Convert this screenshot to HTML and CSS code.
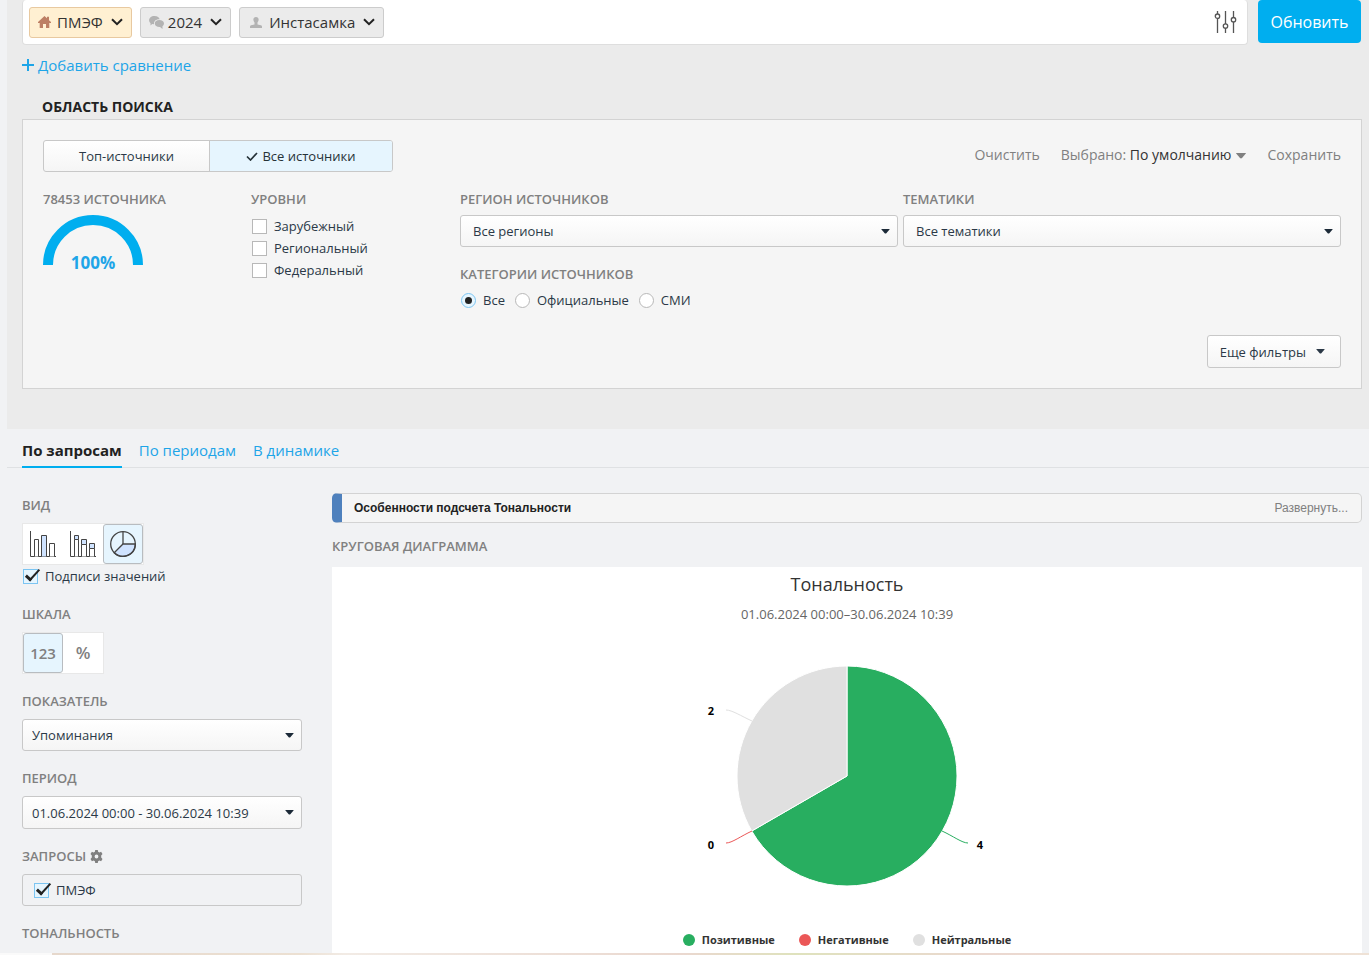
FILE: index.html
```html
<!DOCTYPE html>
<html lang="ru">
<head>
<meta charset="utf-8">
<title>Тональность</title>
<link rel="stylesheet" href="styles.css">
</head>
<body>
<svg class="defs" aria-hidden="true">
  <symbol id="chevron" viewBox="0 0 12 8"><path d="M1 1.2 6 6.2 11 1.2" fill="none" stroke="currentColor" stroke-width="2"/></symbol>
  <symbol id="caret" viewBox="0 0 10 6"><path d="M.5 0h9q.5 0 .3.6L6 5q-1 .8-2 0L.2.6Q0 0 .5 0z" fill="currentColor"/></symbol>
</svg>
<header class="search-area">
  <div class="topbar">
    <div class="query-field">
      <button class="chip chip-active" type="button">
        <svg class="chip-icon home" width="13" height="12" viewBox="0 0 13 12"><path d="M6.5 0 9 2.3V.8h2v3.4L13 6v1h-1.700v5H8V8H5v4H1.700V7H0V6z" fill="currentColor"/></svg>
        <span>ПМЭФ</span><svg class="chevron"><use href="#chevron"/></svg>
      </button>
      <button class="chip" type="button">
        <svg class="chip-icon chat" width="15" height="13" viewBox="0 0 15 13"><path d="M5.500 0C8.500 0 10.300 1.500 10.600 3.200 7.500 3 5 4.700 5 7.200v1L3.200 8 1.500 9.500V7.200C-1.500 4.500.5 0 5.500 0z" fill="currentColor"/><path d="M10.300 4C13 4 15 5.500 15 7.400c0 1.200-.7 2.100-1.500 2.700V13L11 10.900C8 11.100 5.800 9.500 5.800 7.400 5.800 5.500 7.700 4 10.300 4z" fill="currentColor"/></svg>
        <span>2024</span><svg class="chevron"><use href="#chevron"/></svg>
      </button>
      <button class="chip" type="button">
        <svg class="chip-icon person" width="12" height="11" viewBox="0 0 12 11"><path d="M6 0C7.800 0 8.800 1.300 8.600 3 8.500 4.300 7.800 5 7.500 5.600v1.800L11 8.200q1 .3 1 1.300V11H0V9.500Q0 8.500 1 8.200l3.500-.8V5.600C4.200 5 3.500 4.300 3.400 3 3.200 1.300 4.200 0 6 0z" fill="currentColor"/></svg>
        <span>Инстасамка</span><svg class="chevron"><use href="#chevron"/></svg>
      </button>
      <button class="tune" type="button" aria-label="Настройки">
        <svg width="23" height="22" viewBox="0 0 23 22" fill="none" stroke="#555" stroke-width="1.300"><path d="M3.500 0v3M3.500 7.500V22M11.500 0v13M11.500 17v5M19.500 0v6.500M19.500 11v11"/><circle cx="3.500" cy="5.200" r="2.200"/><circle cx="11.500" cy="15" r="2.200"/><circle cx="19.500" cy="8.700" r="2.200"/></svg>
      </button>
    </div>
    <button class="refresh" type="button">Обновить</button>
  </div>
  <a class="add-link" href="#"><svg width="12" height="12" viewBox="0 0 12 12"><path d="M6 0v12M0 6h12" stroke="currentColor" stroke-width="2"/></svg>Добавить сравнение</a>
  <h2 class="area-title">ОБЛАСТЬ ПОИСКА</h2>
  <section class="panel">
    <div class="panel-head">
      <div class="segmented">
        <button type="button">Топ-источники</button>
        <button type="button" class="selected"><svg width="12" height="9" viewBox="0 0 12 9"><path d="M1 4.500 4.500 8 11 1" fill="none" stroke="currentColor" stroke-width="1.700"/></svg>Все источники</button>
      </div>
      <nav class="panel-actions">
        <button type="button">Очистить</button>
        <button type="button">Выбрано: <b>По умолчанию</b><svg class="caret"><use href="#caret"/></svg></button>
        <button type="button">Сохранить</button>
      </nav>
    </div>
    <div class="filters">
      <div>
        <h3 class="label">78453 ИСТОЧНИКА</h3>
        <svg class="gauge" width="100" height="58" viewBox="0 0 100 58"><path d="M5 50a45 45 0 0 1 90 0" fill="none" stroke="#00aeef" stroke-width="10"/><text x="50" y="54" text-anchor="middle">100%</text></svg>
      </div>
      <fieldset class="levels">
        <legend class="label">УРОВНИ</legend>
        <label class="option"><input type="checkbox"><span>Зарубежный</span></label>
        <label class="option"><input type="checkbox"><span>Региональный</span></label>
        <label class="option"><input type="checkbox"><span>Федеральный</span></label>
      </fieldset>
      <div class="source-filters">
        <div>
          <label class="label" for="region">РЕГИОН ИСТОЧНИКОВ</label>
          <div class="select"><select id="region"><option>Все регионы</option></select><svg class="caret"><use href="#caret"/></svg></div>
        </div>
        <div>
          <label class="label" for="topic">ТЕМАТИКИ</label>
          <div class="select"><select id="topic"><option>Все тематики</option></select><svg class="caret"><use href="#caret"/></svg></div>
        </div>
        <fieldset class="categories">
          <legend class="label">КАТЕГОРИИ ИСТОЧНИКОВ</legend>
          <div class="radios">
            <label class="option"><input type="radio" name="category" checked><span>Все</span></label>
            <label class="option"><input type="radio" name="category"><span>Официальные</span></label>
            <label class="option"><input type="radio" name="category"><span>СМИ</span></label>
          </div>
        </fieldset>
      </div>
    </div>
    <div class="panel-foot"><button class="more" type="button">Еще фильтры<svg class="caret"><use href="#caret"/></svg></button></div>
  </section>
</header>
<nav class="tabs">
  <a class="current" href="#">По запросам</a>
  <a href="#">По периодам</a>
  <a href="#">В динамике</a>
</nav>
<div class="content">
  <aside class="sidebar">
    <section>
      <h3 class="label">ВИД</h3>
      <div class="tiles">
        <button type="button" aria-label="Столбцы"><svg width="26" height="26" viewBox="0 0 26 26" fill="#fff" stroke="#444"><path d="M.5 0v25.500H26" fill="none"/><path d="M4.500 25.500v-17h4v17M19.500 25.500v-13h5v13"/><path d="M11.500 25.500v-21h5v21" fill="#cfe3ff"/></svg></button>
        <button type="button" aria-label="Столбцы с накоплением"><svg width="26" height="26" viewBox="0 0 26 26" fill="#fff" stroke="#444"><path d="M.5 0v25.500H26" fill="none"/><path d="M4.500 25.500v-17h4v17M11.500 25.500v-12h5v12M19.500 25.500v-8h5v8"/><path d="M4.500 4.500h4v4h-4zM11.500 8.500h5v5h-5zM19.500 12.500h5v5h-5z" fill="#cfe3ff"/></svg></button>
        <button type="button" class="selected" aria-label="Круговая диаграмма"><svg width="26" height="26" viewBox="0 0 26 26" fill="none" stroke="#444" stroke-width="1.300"><path d="M13 13h12.400A12.400 12.400 0 0 1 4.200 21.700z" fill="#cfe3ff"/><circle cx="13" cy="13" r="12.300"/><path d="M13 .7V13"/></svg></button>
      </div>
      <label class="option captions"><input type="checkbox" checked><span>Подписи значений</span></label>
    </section>
    <section>
      <h3 class="label">ШКАЛА</h3>
      <div class="tiles">
        <button type="button" class="selected scale">123</button>
        <button type="button" class="scale percent">%</button>
      </div>
    </section>
    <section>
      <label class="label" for="metric">ПОКАЗАТЕЛЬ</label>
      <div class="select"><select id="metric"><option>Упоминания</option></select><svg class="caret"><use href="#caret"/></svg></div>
    </section>
    <section>
      <label class="label" for="period">ПЕРИОД</label>
      <div class="select period"><select id="period"><option>01.06.2024 00:00 - 30.06.2024 10:39</option></select><svg class="caret"><use href="#caret"/></svg></div>
    </section>
    <section>
      <h3 class="label">ЗАПРОСЫ <svg width="13" height="13" viewBox="0 0 13 13"><path fill="#808080" fill-rule="evenodd" d="M5.200 0h2.600l.3 1.700 1.300.7 1.700-.6 1.400 2.300L11.200 5.400v2.200l1.300 1.300-1.400 2.300-1.700-.6-1.300.7-.3 1.700H5.200l-.3-1.700-1.300-.7-1.700.6L.5 8.900l1.300-1.300V5.400L.5 4.100l1.400-2.300 1.700.6 1.300-.7zM6.500 4.600a1.900 1.900 0 1 0 0 3.800 1.900 1.900 0 0 0 0-3.800z"/></svg></h3>
      <div class="query-list"><label class="option"><input type="checkbox" checked><span>ПМЭФ</span></label></div>
    </section>
    <section><h3 class="label">ТОНАЛЬНОСТЬ</h3></section>
  </aside>
  <main class="report">
    <div class="notice"><strong>Особенности подсчета Тональности</strong><button type="button">Развернуть...</button></div>
    <h3 class="label">КРУГОВАЯ ДИАГРАММА</h3>
    <figure class="chart">
      <h1>Тональность</h1>
      <p>01.06.2024 00:00–30.06.2024 10:39</p>
      <svg class="pie" width="300" height="230" viewBox="0 0 300 230">
        <path d="M150 115V5A110 110 0 1 1 54.740 170z" fill="#28ae60" stroke="#fff"/>
        <path d="M150 115 54.740 170A110 110 0 0 1 150 5z" fill="#e0e0e0" stroke="#fff"/>
        <g fill="none"><path d="M29 49c6 0 15 6 26 11" stroke="#e0e0e0"/><path d="M29 182c6 0 15-7 26-12" stroke="#eb5757"/><path d="M271 182c-6 0-15-7-26-12" stroke="#28ae60"/></g>
        <text x="14" y="54" text-anchor="middle">2</text><text x="14" y="188" text-anchor="middle">0</text><text x="283" y="188" text-anchor="middle">4</text>
      </svg>
      <ul class="legend"><li class="positive">Позитивные</li><li class="negative">Негативные</li><li class="neutral">Нейтральные</li></ul>
    </figure>
  </main>
</div>
<footer class="strip"></footer>
</body>
</html>
```

FILE: styles.css
```css
* { box-sizing: border-box; }
body { margin: 0; min-height: 100vh; display: flex; flex-direction: column; background: #f1f2f4; color: #2b3947; font: 13px/20px "Open Sans", "Noto Sans", sans-serif; }
button, select { font: inherit; color: inherit; margin: 0; cursor: pointer; }
button { padding: 0; border: 0; background: none; }
h1, h2, h3, p, ul, figure, fieldset { margin: 0; padding: 0; border: 0; min-width: 0; }
svg { flex: none; }
a { text-decoration: none; color: #1ea5e8; }
.defs { display: none; }
.caret { width: 10px; height: 6px; }
.chevron { width: 12px; height: 8px; color: #222; }

.search-area { margin-left: 7px; padding: 0 7px 40px 15px; background: #ebebeb; }
.topbar { display: flex; align-items: flex-start; gap: 10px; padding-right: 1px; }
.query-field { flex: 1; display: flex; align-items: center; gap: 8px; height: 45px; padding: 0 10px 0 6px; background: #fff; border: 1px solid #dedede; border-top: 0; border-radius: 4px; }
.chip { display: flex; align-items: center; height: 31px; padding: 0 8px; background: #ebebeb; border: 1px solid #ccc; border-radius: 3px; font-size: 15px; color: #333; }
.chip-icon { color: #b3b3b3; }
.chip-icon.home { color: #bd7f64; margin-right: 6px; }
.chip-icon.chat { margin-right: 4px; }
.chip-icon.person { margin: 0 7px 0 2px; }
.chip .chevron { margin-left: 8px; }
.chip-active { background: #fff0d2; border-color: #e8c9a0; }
.tune { margin-left: auto; display: flex; }
.refresh { width: 103px; height: 43px; background: #00aeef; border-radius: 4px; color: #fff; font-size: 16px; }
.add-link { display: flex; align-items: center; gap: 4px; height: 40px; width: max-content; font-size: 15px; }
.area-title { padding: 12px 0 0 20px; height: 34px; font-size: 14px; line-height: 20px; font-weight: 700; color: #222; }

.panel { padding: 20px; background: #f5f5f5; border: 1px solid #d3d3d3; }
.panel-head { display: flex; justify-content: space-between; }
.segmented { display: flex; border: 1px solid #c8c8c8; border-radius: 3px; background: linear-gradient(#fff, #f5f5f5); overflow: hidden; }
.segmented button { display: flex; align-items: center; justify-content: center; gap: 4px; width: 165px; height: 30px; }
.segmented .selected { width: 183px; background: #e6f5fe; border-left: 1px solid #c8c8c8; color: #263238; }
.panel-actions { display: flex; align-items: center; gap: 21px; height: 30px; font-size: 14px; color: #808080; }
.panel-actions b { font-weight: 400; color: #333; }
.panel-actions .caret { margin-left: 5px; vertical-align: 1px; }
.label { display: flex; align-items: center; gap: 4px; padding: 0; height: 20px; font-size: 13px; line-height: 20px; font-weight: 600; color: #808080; }
.filters { display: grid; grid-template-columns: 208px 209px 1fr; padding-top: 17px; }
.gauge { display: block; margin-top: 6px; }
.gauge text { fill: #1ea5e8; font-size: 17px; font-weight: 700; }
.levels .label { margin-bottom: 6px; }
.option { display: flex; align-items: center; gap: 7px; height: 22px; width: max-content; }
.option input { appearance: none; flex: none; display: grid; place-items: center; width: 15px; height: 15px; margin: 0 0 0 1px; background: #fff; border: 1px solid #b8b8b8; }
.option input[type="radio"] { border-radius: 50%; }
.option input:checked { background: #e6f5fe; border-color: #7cc5f2; }
.option input[type="radio"]:checked::before { content: ""; width: 7px; height: 7px; border-radius: 50%; background: #222; }
.option input[type="checkbox"]:checked::before { content: ""; width: 12px; height: 5px; margin: -6px -3px 0 0; border: solid #222; border-width: 0 0 2px 3px; transform: rotate(-48deg); }
.source-filters { display: grid; grid-template-columns: 1fr 1fr; column-gap: 5px; }
.select { display: grid; align-items: center; margin-top: 6px; }
.select select { grid-area: 1 / 1; appearance: none; width: 100%; height: 32px; padding: 0 24px 0 12px; background: linear-gradient(#fff, #f5f5f5); border: 1px solid #c8c8c8; border-radius: 3px; }
.select .caret { grid-area: 1 / 1; justify-self: end; width: 9px; height: 5px; margin-right: 8px; color: #1c2a38; pointer-events: none; }
.categories { grid-column: 1 / -1; margin-top: 17px; }
.radios { display: flex; gap: 9px; padding-top: 5px; }
.panel-foot { display: flex; justify-content: flex-end; padding-top: 24px; }
.more { display: flex; align-items: center; gap: 10px; height: 33px; padding: 0 15px 0 12px; background: linear-gradient(#fff, #f5f5f5); border: 1px solid #c8c8c8; border-radius: 3px; }
.more .caret { width: 9px; height: 5px; }

.tabs { display: flex; gap: 17px; margin-left: 7px; padding-left: 15px; border-bottom: 1px solid #dfe1e3; font-size: 15px; }
.tabs a { height: 39px; line-height: 43px; margin-bottom: -1px; }
.tabs .current { font-weight: 700; color: #222; border-bottom: 2px solid #00aeef; }

.content { flex: 1; display: grid; grid-template-columns: 280px 1fr; column-gap: 30px; padding: 25px 7px 0 22px; }
.sidebar { display: flex; flex-direction: column; gap: 17px; padding-top: 2px; }
.tiles { display: flex; width: max-content; margin-top: 8px; background: #fff; border: 1px solid #e8e8e8; }
.tiles button { display: grid; place-items: center; width: 40px; height: 40px; }
.tiles .selected { background: #e6f5fe; border: 1px solid #b8bcc0; border-radius: 3px; }
.tiles .scale { font-size: 15px; font-weight: 600; color: #808080; }
.tiles .percent { font-size: 17px; }
.sidebar .select select { padding-left: 9px; }
.sidebar .select, .query-list { margin-top: 8px; }
.sidebar .period select { height: 33px; }
.query-list { padding: 4px 10px; border: 1px solid #c8c8c8; border-radius: 3px; }
.report { display: flex; flex-direction: column; }
.notice { display: flex; align-items: center; justify-content: space-between; height: 30px; margin-bottom: 13px; padding: 0 13px 0 12px; border: 1px solid #d3d3d3; border-left: 10px solid #4f81bd; border-radius: 5px; background: #f5f5f5; font: 12px/20px "Liberation Sans", sans-serif; color: #222; }
.notice button { color: #808080; }
.chart { flex: 1; display: flex; flex-direction: column; align-items: center; margin-top: 11px; padding-bottom: 3px; background: #fff; color: #333; }
.chart h1 { padding-top: 7px; font-size: 18px; line-height: 20px; font-weight: 400; }
.chart p { padding-top: 10px; font-size: 13px; line-height: 20px; color: #666; }
.pie { margin-top: 37px; }
.pie text { font-size: 11px; font-weight: 700; fill: #000; }
.legend { display: flex; gap: 24px; margin-top: 39px; list-style: none; font-size: 11px; font-weight: 700; }
.legend li { display: flex; align-items: center; gap: 7px; }
.legend li::before { content: ""; width: 12px; height: 12px; border-radius: 50%; background: #e0e0e0; }
.legend .positive::before { background: #28ae60; }
.legend .negative::before { background: #eb5757; }
.strip { height: 2px; background: linear-gradient(90deg, #fafafa 52px, #e6d8cc 52px, #ece0d2 300px, #f2ebe5 345px, #ead8cf 50%, #dfe2bd 58%, #ebd8d0 72%, #efe2d6); }
```
